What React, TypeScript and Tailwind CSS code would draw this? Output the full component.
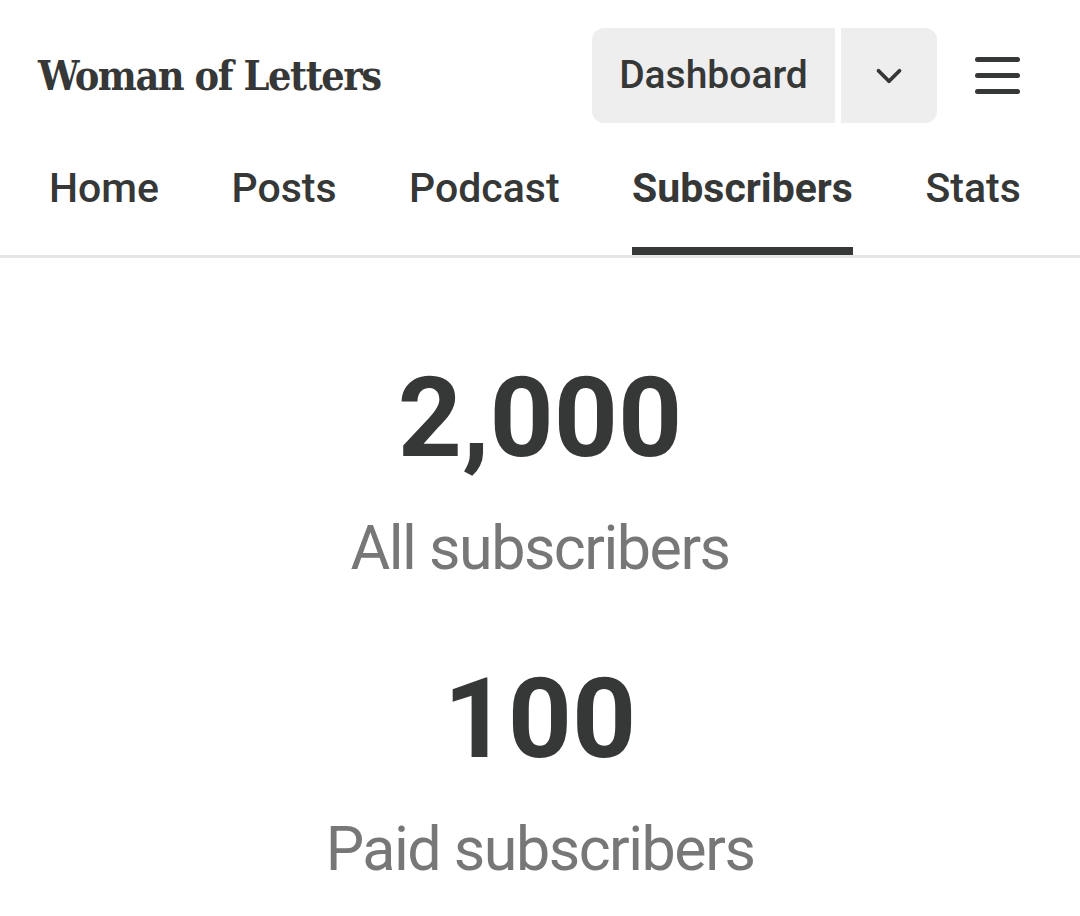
import { ChevronDown } from 'lucide-react'

const tabs = ['Home', 'Posts', 'Podcast', 'Subscribers', 'Stats']

const Stat = ({ value, label }: { value: string; label: string }) => (
  <div className="flex flex-col items-center">
    <div className="text-[112px] font-bold leading-[128px] text-[#363737]">{value}</div>
    <div className="mt-[31px] text-[61px] leading-[70px] tracking-[-1.5px] text-[#777777]">{label}</div>
  </div>
)

const App = () => {
  return (
    <div className="min-h-[916px] w-[1080px] bg-white font-['Roboto',sans-serif]">
      {/* Header */}
      <div className="flex h-[152px] items-start justify-between pl-[38px] pr-[60px] pt-[28px]">
        <h1 className="mt-[20px] font-['DejaVu_Serif',serif] text-[41px] font-bold leading-[56px] tracking-[-1.45px] text-[#363737] [font-stretch:condensed]">
          Woman of Letters
        </h1>
        <div className="flex items-center">
          <div className="flex h-[95px]">
            <button className="w-[243px] rounded-l-[12px] bg-[#eeeeee] text-[39px] font-medium text-[#363737]">
              Dashboard
            </button>
            <button className="ml-[6px] flex w-[96px] items-center justify-center rounded-r-[12px] bg-[#eeeeee] text-[#363737]">
              <ChevronDown className="h-[42px] w-[42px]" strokeWidth={2.2} />
            </button>
          </div>
          <button className="ml-[38px] flex h-[95px] w-[45px] flex-col justify-center gap-[11px]">
            <span className="h-[5px] w-[45px] rounded-full bg-[#363737]" />
            <span className="h-[5px] w-[45px] rounded-full bg-[#363737]" />
            <span className="h-[5px] w-[45px] rounded-full bg-[#363737]" />
          </button>
        </div>
      </div>

      {/* Tabs */}
      <div className="flex gap-[72.5px] border-b-[3px] border-[#e6e6e6] pl-[49px]">
        {tabs.map((t) => (
          <div
            key={t}
            className={`flex flex-col text-[41px] leading-[72px] text-[#363737] ${
              t === 'Subscribers' ? 'font-bold' : 'font-medium'
            }`}
          >
            <span>{t}</span>
            <span className={`mt-[23px] h-[8px] ${t === 'Subscribers' ? 'bg-[#363737]' : 'bg-transparent'}`} />
          </div>
        ))}
      </div>

      {/* Stats */}
      <div className="flex flex-col items-center gap-[72px] pt-[96px]">
        <Stat value="2,000" label="All subscribers" />
        <Stat value="100" label="Paid subscribers" />
      </div>
    </div>
  )
}

export default App
